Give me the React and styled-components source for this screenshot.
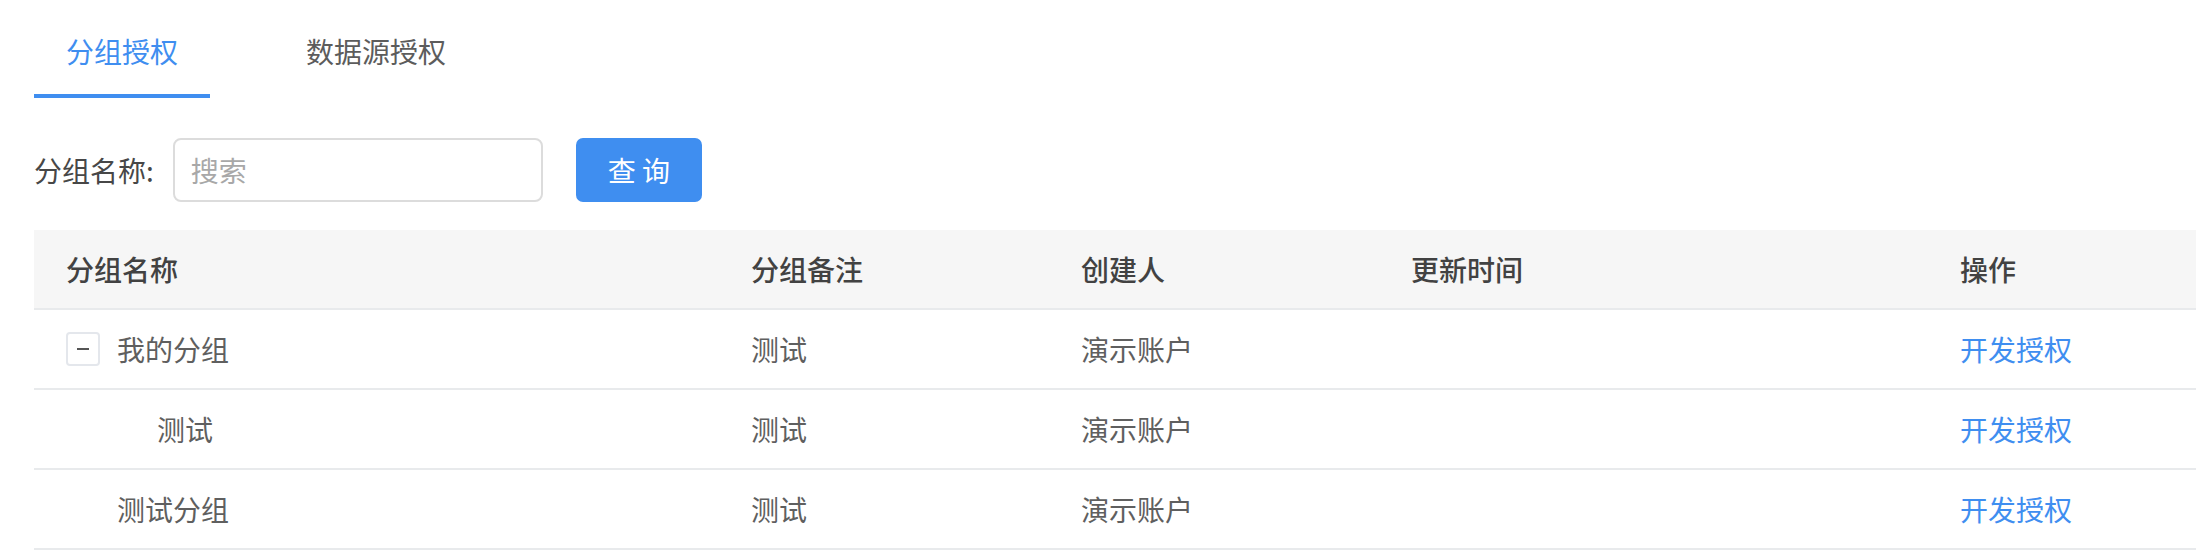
import React from "react";
import styled, { createGlobalStyle } from "styled-components";

const GlobalStyle = createGlobalStyle`
  html, body {
    margin: 0;
    padding: 0;
    background: #ffffff;
  }
  body {
    font-family: "Noto Sans CJK SC", "Noto Sans", sans-serif;
    font-size: 28px;
    color: #606266;
  }
  * { box-sizing: border-box; }
`;

const BLUE = "#3f8ef0";
const LINE = "#e8eaec";

const Page = styled.div`
  padding: 0 0 0 34px;
  overflow: hidden;
`;

const TabBar = styled.div`
  display: flex;
  gap: 64px;
  height: 98px;
`;

const Tab = styled.div`
  padding: 30px 32px 22px;
  line-height: 42px;
  font-size: 28px;
  color: ${(p) => (p.$active ? BLUE : "#5c5c5c")};
  border-bottom: 4px solid ${(p) => (p.$active ? BLUE : "transparent")};
  cursor: pointer;
  white-space: nowrap;
`;

const SearchForm = styled.div`
  display: flex;
  align-items: center;
  margin-top: 40px;
  height: 64px;
`;

const Label = styled.label`
  font-size: 28px;
  color: #474747;
  margin-right: 19px;
  white-space: nowrap;
`;

const SearchInput = styled.input`
  width: 370px;
  height: 64px;
  border: 2px solid #dcdcdc;
  border-radius: 8px;
  padding: 0 16px;
  font-family: inherit;
  font-size: 28px;
  color: #606266;
  outline: none;
  &::placeholder {
    color: #a8a8a8;
  }
`;

const QueryButton = styled.button`
  margin-left: 33px;
  width: 126px;
  height: 64px;
  border: none;
  border-radius: 7px;
  background: ${BLUE};
  color: #ffffff;
  font-family: inherit;
  font-size: 28px;
  cursor: pointer;
`;

const Table = styled.div`
  margin-top: 28px;
  width: 2400px;
`;

const Row = styled.div`
  display: grid;
  grid-template-columns: 685px 330px 330px 549px 1fr;
  height: 80px;
  border-bottom: 2px solid ${LINE};
  background: ${(p) => (p.$head ? "#f6f6f6" : "#ffffff")};
`;

const Cell = styled.div`
  display: flex;
  align-items: center;
  padding: 0 32px;
  padding-left: ${(p) => 32 + (p.$indent || 0)}px;
  font-size: 28px;
  color: ${(p) => (p.$head ? "#424242" : "#5f5f5f")};
  font-weight: ${(p) => (p.$head ? 500 : 400)};
  white-space: nowrap;
`;

const ExpandIcon = styled.span`
  position: relative;
  display: inline-block;
  flex: none;
  width: 34px;
  height: 34px;
  margin-right: 17px;
  border: 2px solid #e4e7ec;
  border-radius: 4px;
  background: #fff;
  &::after {
    content: "";
    position: absolute;
    left: 9px;
    top: 14px;
    width: 12px;
    height: 2px;
    background: #555;
  }
`;

const Spacer = styled.span`
  display: inline-block;
  flex: none;
  width: 51px;
`;

const Link = styled.a`
  color: ${BLUE};
  cursor: pointer;
  text-decoration: none;
`;

const rows = [
  { name: "我的分组", remark: "测试", creator: "演示账户", level: 0, expandable: true },
  { name: "测试", remark: "测试", creator: "演示账户", level: 1, expandable: false },
  { name: "测试分组", remark: "测试", creator: "演示账户", level: 0, expandable: false },
];

export default function App() {
  return (
    <>
      <GlobalStyle />
      <Page>
        <TabBar>
          <Tab $active>分组授权</Tab>
          <Tab>数据源授权</Tab>
        </TabBar>
        <SearchForm>
          <Label>分组名称:</Label>
          <SearchInput placeholder="搜索" />
          <QueryButton>查 询</QueryButton>
        </SearchForm>
        <Table>
          <Row $head>
            <Cell $head>分组名称</Cell>
            <Cell $head>分组备注</Cell>
            <Cell $head>创建人</Cell>
            <Cell $head>更新时间</Cell>
            <Cell $head>操作</Cell>
          </Row>
          {rows.map((r, i) => (
            <Row key={i}>
              <Cell $indent={r.level * 40}>
                {r.expandable ? <ExpandIcon /> : <Spacer />}
                {r.name}
              </Cell>
              <Cell>{r.remark}</Cell>
              <Cell>{r.creator}</Cell>
              <Cell></Cell>
              <Cell>
                <Link>开发授权</Link>
              </Cell>
            </Row>
          ))}
        </Table>
      </Page>
    </>
  );
}
